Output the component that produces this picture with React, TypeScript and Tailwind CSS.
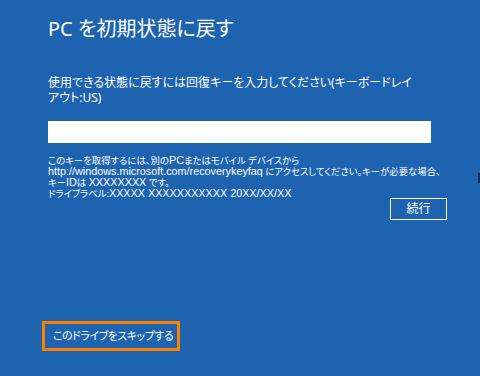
const font = { fontFamily: '"Noto Sans", "Noto Sans CJK JP", sans-serif' };

// Latin runs in the small text use an Arial-width face, a bit larger than the Japanese
const L = ({ children }: { children: React.ReactNode }) => (
  <span className="font-['Liberation_Sans','Noto_Sans_CJK_JP',sans-serif] text-[10.8px]">{children}</span>
);

export default function App() {
  return (
    <div
      className="relative flex h-[376px] w-[480px] flex-col bg-[#1d63b0] text-white [font-feature-settings:'palt']"
      style={font}
    >
      <div className="pl-[48px] pr-[25px]">
        <h1 className="pt-[15px] text-[20px] leading-[28px] font-normal">PC を初期状態に戻す</h1>

        <p className="mt-[32px] text-[12px] leading-[15px]">
          使用できる状態に戻すには回復キーを入力してください(キーボードレイ
          <br />
          アウト:US)
        </p>

        <div className="mt-[16px] h-[22px] w-[383px] bg-white" />

        <div className="mt-[12px] whitespace-nowrap text-[9.4px] leading-[11px]">
          <p>
            このキーを取得するには、別の<L>PC</L>またはモバイル デバイスから
          </p>
          <p>
            <L>http://windows.microsoft.com/recoverykeyfaq</L> にアクセスしてください。キーが必要な場合、
          </p>
          <p>
            キー<L>ID</L>は <L>XXXXXXXX</L> です。
          </p>
          <p>
            ドライブラベル:<L>XXXXX XXXXXXXXXXX 20XX/XX/XX</L>
          </p>
        </div>

        <div className="flex w-[399px] justify-end">
          <button className="-mt-[1px] flex h-[22px] w-[57px] items-center justify-center border border-white text-[12px]">
            続行
          </button>
        </div>
      </div>

      <div className="mt-auto pb-[25px] pl-[42px]">
        <button className="flex h-[30px] w-[138px] items-center whitespace-nowrap border-[3px] border-[#ff8000] pl-[8px] text-[11px] tracking-[-0.5px]">
          このドライブをスキップする
        </button>
      </div>

      <div className="absolute right-0 top-[173px] h-[10px] w-[2px] bg-[#0b2c5e]" />
    </div>
  );
}
